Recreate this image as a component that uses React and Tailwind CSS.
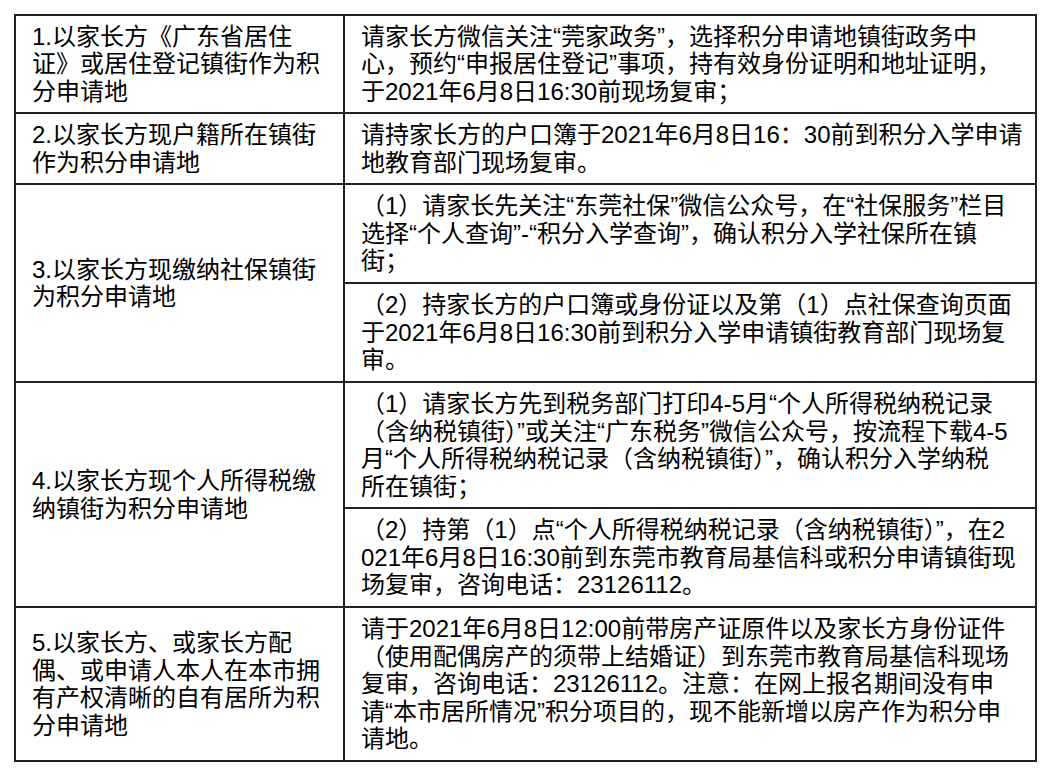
import React from "react";

const rows = [
  {
    label: ["1.以家长方《广东省居住", "证》或居住登记镇街作为积", "分申请地"],
    items: [
      [
        "请家长方微信关注“莞家政务”，选择积分申请地镇街政务中",
        "心，预约“申报居住登记”事项，持有效身份证明和地址证明，",
        "于2021年6月8日16:30前现场复审；",
      ],
    ],
  },
  {
    label: ["2.以家长方现户籍所在镇街", "作为积分申请地"],
    items: [["请持家长方的户口簿于2021年6月8日16：30前到积分入学申请", "地教育部门现场复审。"]],
  },
  {
    label: ["3.以家长方现缴纳社保镇街", "为积分申请地"],
    items: [
      [
        "（1）请家长先关注“东莞社保”微信公众号，在“社保服务”栏目",
        "选择“个人查询”-“积分入学查询”，确认积分入学社保所在镇",
        "街；",
      ],
      [
        "（2）持家长方的户口簿或身份证以及第（1）点社保查询页面",
        "于2021年6月8日16:30前到积分入学申请镇街教育部门现场复",
        "审。",
      ],
    ],
  },
  {
    label: ["4.以家长方现个人所得税缴", "纳镇街为积分申请地"],
    items: [
      [
        "（1）请家长方先到税务部门打印4-5月“个人所得税纳税记录",
        "（含纳税镇街）”或关注“广东税务”微信公众号，按流程下载4-5",
        "月“个人所得税纳税记录（含纳税镇街）”，确认积分入学纳税",
        "所在镇街；",
      ],
      [
        "（2）持第（1）点“个人所得税纳税记录（含纳税镇街）”，在2",
        "021年6月8日16:30前到东莞市教育局基信科或积分申请镇街现",
        "场复审，咨询电话：23126112。",
      ],
    ],
  },
  {
    label: ["5.以家长方、或家长方配", "偶、或申请人本人在本市拥", "有产权清晰的自有居所为积", "分申请地"],
    items: [
      [
        "请于2021年6月8日12:00前带房产证原件以及家长方身份证件",
        "（使用配偶房产的须带上结婚证）到东莞市教育局基信科现场",
        "复审，咨询电话：23126112。注意：在网上报名期间没有申",
        "请“本市居所情况”积分项目的，现不能新增以房产作为积分申",
        "请地。",
      ],
    ],
  },
];

function Lines({ lines }) {
  return lines.map((l, i) => (
    <span key={i} className="block whitespace-nowrap">
      {l}
    </span>
  ));
}

export default function App() {
  return (
    <div className="bg-white min-h-[770px] pt-[14px] pl-[14px] text-black font-['Liberation_Sans','Noto_Sans_CJK_SC',sans-serif] text-[24px] leading-[27.5px]">
      <div className="grid w-[1023px] grid-cols-[329px_692px] grid-rows-[98px_71px_99px_99px_126px_99px_154px] border-t-2 border-l-2 border-[#222]">
        {rows.map((row, r) => (
          <React.Fragment key={r}>
            <div
              className={
                "flex flex-col justify-center px-4 border-r-2 border-b-2 border-[#222] " +
                (row.items.length > 1 ? "row-span-2" : "")
              }
            >
              <Lines lines={row.label} />
            </div>
            {row.items.map((item, i) => (
              <div
                key={i}
                className="flex flex-col justify-center px-4 border-r-2 border-b-2 border-[#222] overflow-hidden"
              >
                <Lines lines={item} />
              </div>
            ))}
          </React.Fragment>
        ))}
      </div>
    </div>
  );
}
